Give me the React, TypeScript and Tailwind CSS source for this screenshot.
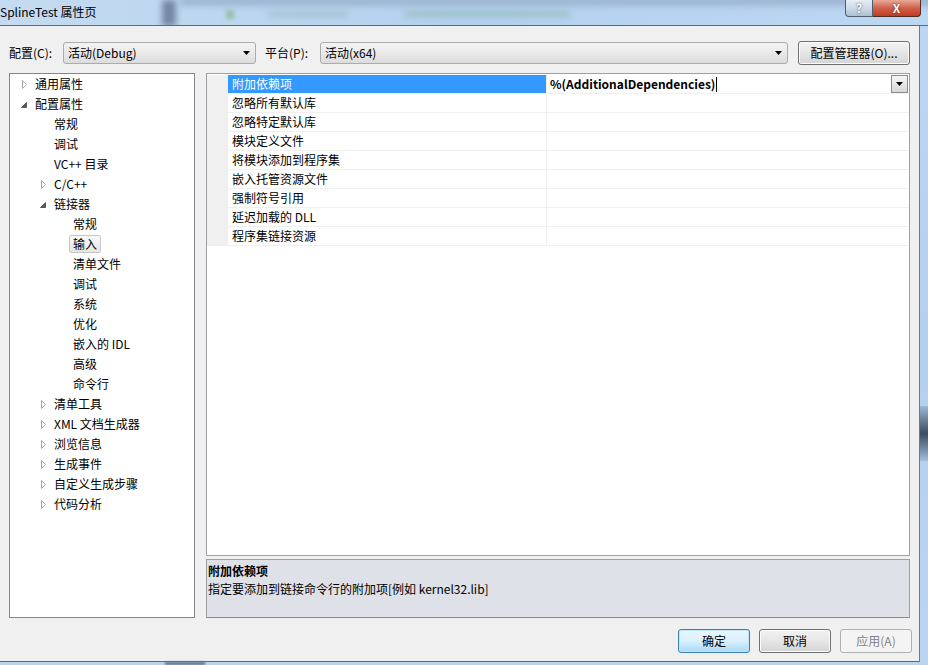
const ui = "font-['Noto_Sans_CJK_SC','Noto_Sans',sans-serif]";

type TreeNode = {
  label: string;
  level: number;
  state?: "open" | "closed";
  selected?: boolean;
};

const tree: TreeNode[] = [
  { label: "通用属性", level: 0, state: "closed" },
  { label: "配置属性", level: 0, state: "open" },
  { label: "常规", level: 1 },
  { label: "调试", level: 1 },
  { label: "VC++ 目录", level: 1 },
  { label: "C/C++", level: 1, state: "closed" },
  { label: "链接器", level: 1, state: "open" },
  { label: "常规", level: 2 },
  { label: "输入", level: 2, selected: true },
  { label: "清单文件", level: 2 },
  { label: "调试", level: 2 },
  { label: "系统", level: 2 },
  { label: "优化", level: 2 },
  { label: "嵌入的 IDL", level: 2 },
  { label: "高级", level: 2 },
  { label: "命令行", level: 2 },
  { label: "清单工具", level: 1, state: "closed" },
  { label: "XML 文档生成器", level: 1, state: "closed" },
  { label: "浏览信息", level: 1, state: "closed" },
  { label: "生成事件", level: 1, state: "closed" },
  { label: "自定义生成步骤", level: 1, state: "closed" },
  { label: "代码分析", level: 1, state: "closed" },
];

const properties = [
  "附加依赖项",
  "忽略所有默认库",
  "忽略特定默认库",
  "模块定义文件",
  "将模块添加到程序集",
  "嵌入托管资源文件",
  "强制符号引用",
  "延迟加载的 DLL",
  "程序集链接资源",
];

const indents = ["pl-[10px]", "pl-[29px]", "pl-[48px]"];

function DownArrow() {
  return (
    <svg width="7" height="4" viewBox="0 0 7 4">
      <path d="M0 0h7L3.5 4z" fill="#000" />
    </svg>
  );
}

function Expander({ state }: { state?: "open" | "closed" }) {
  return (
    <span className="flex h-[20px] w-[15px] shrink-0 items-center">
      {state === "closed" && (
        <svg width="6" height="9" viewBox="0 0 6 9" className="ml-[2px]">
          <path d="M0.5 0.5L4.5 4.5L0.5 8.5Z" fill="#fff" stroke="#a6a6a6" />
        </svg>
      )}
      {state === "open" && (
        <svg width="6" height="6" viewBox="0 0 6 6" className="ml-[1px] mt-[2px]">
          <path d="M5.5 0.5V5.5H0.5Z" fill="#595959" stroke="#595959" />
        </svg>
      )}
    </span>
  );
}

function Combo({ text, className }: { text: string; className: string }) {
  return (
    <div
      className={`flex h-[22px] items-center justify-between rounded-[3px] border border-[#acacac] bg-gradient-to-b from-[#f3f3f3] via-[#eaeaea] to-[#dcdcdc] pl-[4px] pr-[5px] ${className}`}
    >
      <span>{text}</span>
      <DownArrow />
    </div>
  );
}

function Button({ label, kind }: { label: string; kind?: "default" | "disabled" }) {
  if (kind === "default")
    return (
      <div className="flex h-[24px] w-[72px] items-center justify-center rounded-[3px] border border-[#3c7fb1] bg-gradient-to-b from-[#eaf6fd] via-[#d9f0fc] to-[#a7d9f5] shadow-[inset_0_0_0_1px_#c0e6f8]">
        {label}
      </div>
    );
  if (kind === "disabled")
    return (
      <div className="flex h-[24px] w-[72px] items-center justify-center rounded-[3px] border border-[#adb2b5] bg-[#f4f4f4] text-[#838383]">
        {label}
      </div>
    );
  return (
    <div className="flex h-[24px] w-[72px] items-center justify-center rounded-[3px] border border-[#707070] bg-gradient-to-b from-[#f2f2f2] via-[#e6e6e6] to-[#d4d4d4] shadow-[inset_0_0_0_1px_#fcfcfc]">
      {label}
    </div>
  );
}

function TitleBar() {
  return (
    <div className="relative flex h-[26px] shrink-0 items-start overflow-hidden border-b border-[#5a6b80] bg-gradient-to-r from-[#c4dbf1] via-[#b4d1ee] to-[#bcd7f2]">
      {/* blurred glass behind the title */}
      <div className="absolute left-[162px] top-0 h-[26px] w-[14px] bg-[#7387a2] blur-[3px]" />
      <div className="absolute left-[180px] top-[-4px] h-[10px] w-[760px] bg-[#9db6d2] blur-[3px]" />
      <div className="absolute left-[226px] top-[10px] h-[9px] w-[8px] bg-[#7fb98a] opacity-70 blur-[2px]" />
      <div className="absolute left-[268px] top-[11px] h-[6px] w-[80px] bg-[#8cb4b4] opacity-50 blur-[3px]" />
      <div className="absolute left-[405px] top-[11px] h-[6px] w-[165px] bg-[#80b09a] opacity-50 blur-[3px]" />
      <span className={`relative z-10 mt-[4px] text-[12px] leading-[16px] text-black ${ui}`}>
        SplineTest 属性页
      </span>
      <div className="relative z-10 ml-auto mr-[7px] flex">
        <div className="flex h-[17px] w-[28px] items-center justify-center rounded-bl-[4px] border border-t-0 border-[#4f5f72] bg-gradient-to-b from-[#e6edf5] via-[#cfdbe8] to-[#aebfd2] text-[12px] font-bold leading-none text-white [text-shadow:0_0_2px_#333]">
          ?
        </div>
        <div className="flex h-[17px] w-[48px] items-center justify-center rounded-br-[4px] border border-l-0 border-t-0 border-[#4f2c24] bg-gradient-to-b from-[#e9a99a] via-[#d0604a] to-[#c23a22] text-[12px] font-bold leading-none text-white [text-shadow:0_0_2px_#421]">
          X
        </div>
      </div>
    </div>
  );
}

export default function App() {
  return (
    <div className={`flex h-[665px] w-[928px] flex-col overflow-hidden bg-[#b8d4ef] text-[12px] text-black ${ui}`}>
      <TitleBar />

      <div className="flex h-[636px] shrink-0">
        <main className="flex w-[919px] shrink-0 flex-col border-b border-[#5a6b80] bg-[#f0f0f0] pl-[9px] pt-[15px]">
          <div className="flex h-[24px] items-center">
            <span className="w-[54px]">配置(C):</span>
            <Combo text="活动(Debug)" className="w-[193px]" />
            <span className="ml-[9px] w-[55px]">平台(P):</span>
            <Combo text="活动(x64)" className="w-[468px]" />
            <div className="ml-[10px] flex h-[24px] w-[112px] items-center justify-center rounded-[3px] border border-[#707070] bg-gradient-to-b from-[#f2f2f2] via-[#e6e6e6] to-[#d4d4d4] shadow-[inset_0_0_0_1px_#fcfcfc]">
              配置管理器(O)...
            </div>
          </div>

          <div className="mt-[8px] flex h-[545px]">
            <nav className="w-[186px] border border-[#828790] bg-white">
              {tree.map((node, i) => (
                <div key={i} className={`flex h-[20px] items-center ${indents[node.level]}`}>
                  <Expander state={node.state} />
                  {node.selected ? (
                    <span className="-ml-[4px] rounded-[2px] border border-[#c8c8c8] bg-gradient-to-b from-[#f9f9f9] to-[#e6e6e6] px-[3px] leading-[16px]">
                      {node.label}
                    </span>
                  ) : (
                    <span className="leading-[20px]">{node.label}</span>
                  )}
                </div>
              ))}
            </nav>

            <section className="ml-[11px] flex w-[704px] flex-col">
              <div className="h-[483px] border border-[#a0a0a0] bg-white pt-[1px]">
                {properties.map((name, i) => (
                  <div key={name} className="flex h-[19px]">
                    <div className="w-[21px] shrink-0 bg-[#f0f0f0]" />
                    <div className="flex flex-1 border-b border-[#f0f0f0]">
                      <div
                        className={`flex w-[318px] shrink-0 items-center pl-[4px] ${
                          i === 0 ? "bg-[#3399ff] text-white" : ""
                        }`}
                      >
                        {name}
                      </div>
                      <div className="flex flex-1 items-center border-l border-[#f0f0f0] pl-[3px] pr-[1px]">
                        {i === 0 && (
                          <>
                            <span className="font-bold">%(AdditionalDependencies)</span>
                            <span className="ml-[1px] h-[15px] w-px bg-black" />
                            <div className="ml-auto flex h-[18px] w-[17px] items-center justify-center border border-[#8c8c8c] bg-gradient-to-b from-[#f6f6f6] to-[#d8d8d8]">
                              <DownArrow />
                            </div>
                          </>
                        )}
                      </div>
                    </div>
                  </div>
                ))}
              </div>

              <div className="mt-[3px] h-[59px] border border-[#a0a0a0] border-b-[#8a8a8a] bg-[#dee1e7] pl-[1px] pt-[2px]">
                <div className="font-bold leading-[18px]">附加依赖项</div>
                <div className="leading-[18px]">指定要添加到链接命令行的附加项[例如 kernel32.lib]</div>
              </div>
            </section>
          </div>

          <div className="ml-[669px] mt-[11px] flex gap-[9px]">
            <Button label="确定" kind="default" />
            <Button label="取消" />
            <Button label="应用(A)" kind="disabled" />
          </div>
        </main>

        <div className="w-px shrink-0 bg-[#6b7a8c]" />
        <div className="flex-1 bg-gradient-to-b from-[#bcd7f2] via-[#b3d0ee] to-[#b9d5f1]">
          <div className="mt-[380px] h-[55px] bg-gradient-to-b from-[#9fb9d6] via-[#3d4d63] to-[#a4bfdc]" />
        </div>
      </div>

      <div className="flex h-[3px] shrink-0 bg-[#b8d4ef]">
        <div className="ml-[165px] h-[3px] w-[40px] bg-[#5d7190] blur-[1px]" />
      </div>
    </div>
  );
}
